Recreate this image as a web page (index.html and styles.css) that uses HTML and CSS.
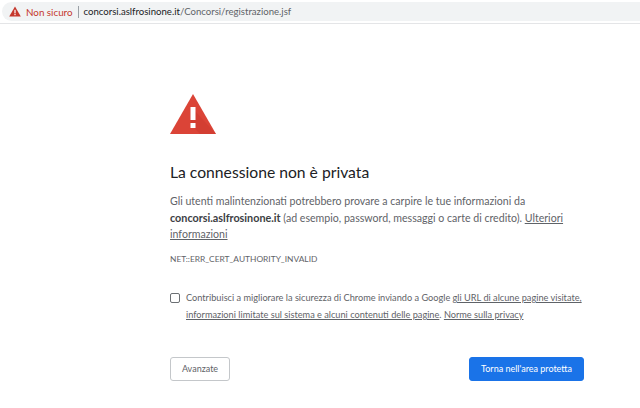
FILE: index.html
```html
<!DOCTYPE html>
<html lang="it">
<head>
    <meta charset="UTF-8">
    <title>Errore di privacy</title>
    <link rel="stylesheet" href="styles.css">
</head>
<body>
    <header class="toolbar">
        <div class="omnibox">
            <svg class="omnibox__icon" viewBox="0 0 12 11"><path d="M6 0.5 L11.8 10.5 H0.2 Z" fill="#c5372c"/><rect x="5.4" y="3.8" width="1.2" height="3.6" fill="#fff"/><rect x="5.4" y="8" width="1.2" height="1.2" fill="#fff"/></svg>
            <span class="omnibox__status">Non sicuro</span>
            <span class="omnibox__sep"></span>
            <span class="omnibox__url"><span class="omnibox__host">concorsi.aslfrosinone.it</span>/Concorsi/registrazione.jsf</span>
        </div>
    </header>
    <main class="interstitial">
        <svg class="warning" viewBox="0 0 46 40">
            <path d="M23 0 L46 40 H0 Z" fill="#db4437"/>
            <path d="M20.5 12 L46 40 H30 L20.5 30 Z" fill="#c9382c" opacity="0.45"/>
            <rect x="20.5" y="13" width="5" height="13" fill="#fff"/>
            <rect x="20.5" y="29" width="5" height="5" fill="#fff"/>
        </svg>
        <h1 class="title">La connessione non è privata</h1>
        <p class="message">Gli utenti malintenzionati potrebbero provare a carpire le tue informazioni da <strong>concorsi.aslfrosinone.it</strong> (ad esempio, password, messaggi o carte di credito). <a href="#">Ulteriori informazioni</a></p>
        <p class="code">NET::ERR_CERT_AUTHORITY_INVALID</p>
        <div class="optin">
            <span class="optin__box"></span>
            <p class="optin__text">Contribuisci a migliorare la sicurezza di Chrome inviando a Google <a href="#">gli URL di alcune pagine visitate, informazioni limitate sul sistema e alcuni contenuti delle pagine</a>. <a href="#">Norme sulla privacy</a></p>
        </div>
        <div class="actions">
            <button class="btn btn--plain">Avanzate</button>
            <button class="btn btn--primary">Torna nell'area protetta</button>
        </div>
    </main>
</body>
</html>
```

FILE: styles.css
```css
*, *::before, *::after {
    box-sizing: border-box;
}
body {
    font-family: Lato, "Open Sans", sans-serif;
    margin: 0;
    padding: 0;
    background: #fff;
    color: #5f6368;
    height: 408px;
    overflow: hidden;
}
.toolbar {
    height: 24px;
    padding: 2px 0 0 2px;
    border-bottom: 1px solid #e4e5e7;
}
.omnibox {
    display: flex;
    align-items: center;
    height: 19px;
    background: #f1f3f4;
    border-radius: 10px 0 0 10px;
    padding-left: 7px;
    font-size: 9.8px;
}
.omnibox__icon { width: 12px; height: 11px; margin-right: 5px; }
.omnibox__status { color: #c5372c; }
.omnibox__sep { width: 1px; height: 12px; background: #9aa0a6; margin: 0 5px; }
.omnibox__url { color: #5f6368; font-size: 9.6px; }
.omnibox__host { color: #202124; }
.interstitial {
    width: 416px;
    margin-left: 170px;
    padding-top: 70px;
}
.warning { display: block; width: 46px; height: 40px; }
.title {
    margin: 27px 0 0;
    font-size: 15.7px;
    font-weight: 400;
    line-height: 22px;
    color: #202124;
}
.message {
    margin: 10px 0 0;
    font-size: 10.6px;
    line-height: 16.6px;
}
.message strong { font-size: 10.8px; font-weight: 700; color: #3c4043; }
a { color: #5f6368; text-decoration: underline; }
.code {
    margin: 9px 0 0;
    font-size: 8.4px;
    line-height: 14px;
}
.optin {
    display: flex;
    gap: 6px;
    margin-top: 23px;
}
.optin__box {
    flex: none;
    width: 10px;
    height: 10px;
    margin-top: 4px;
    border: 1px solid #6b6f73;
    border-radius: 2px;
}
.optin__text {
    margin: 0;
    font-size: 9.2px;
    line-height: 17px;
}
.actions {
    display: flex;
    justify-content: space-between;
    margin-top: 34px;
    padding-right: 2px;
}
.btn {
    font-family: inherit;
    font-size: 9px;
    height: 24px;
    border-radius: 3px;
    padding: 0;
}
.btn--plain {
    width: 60px;
    background: #fff;
    color: #5f6368;
    border: 1px solid #c4c7ca;
}
.btn--primary {
    width: 115px;
    background: #1a73e8;
    color: #fff;
    border: 1px solid #1a73e8;
}
```
